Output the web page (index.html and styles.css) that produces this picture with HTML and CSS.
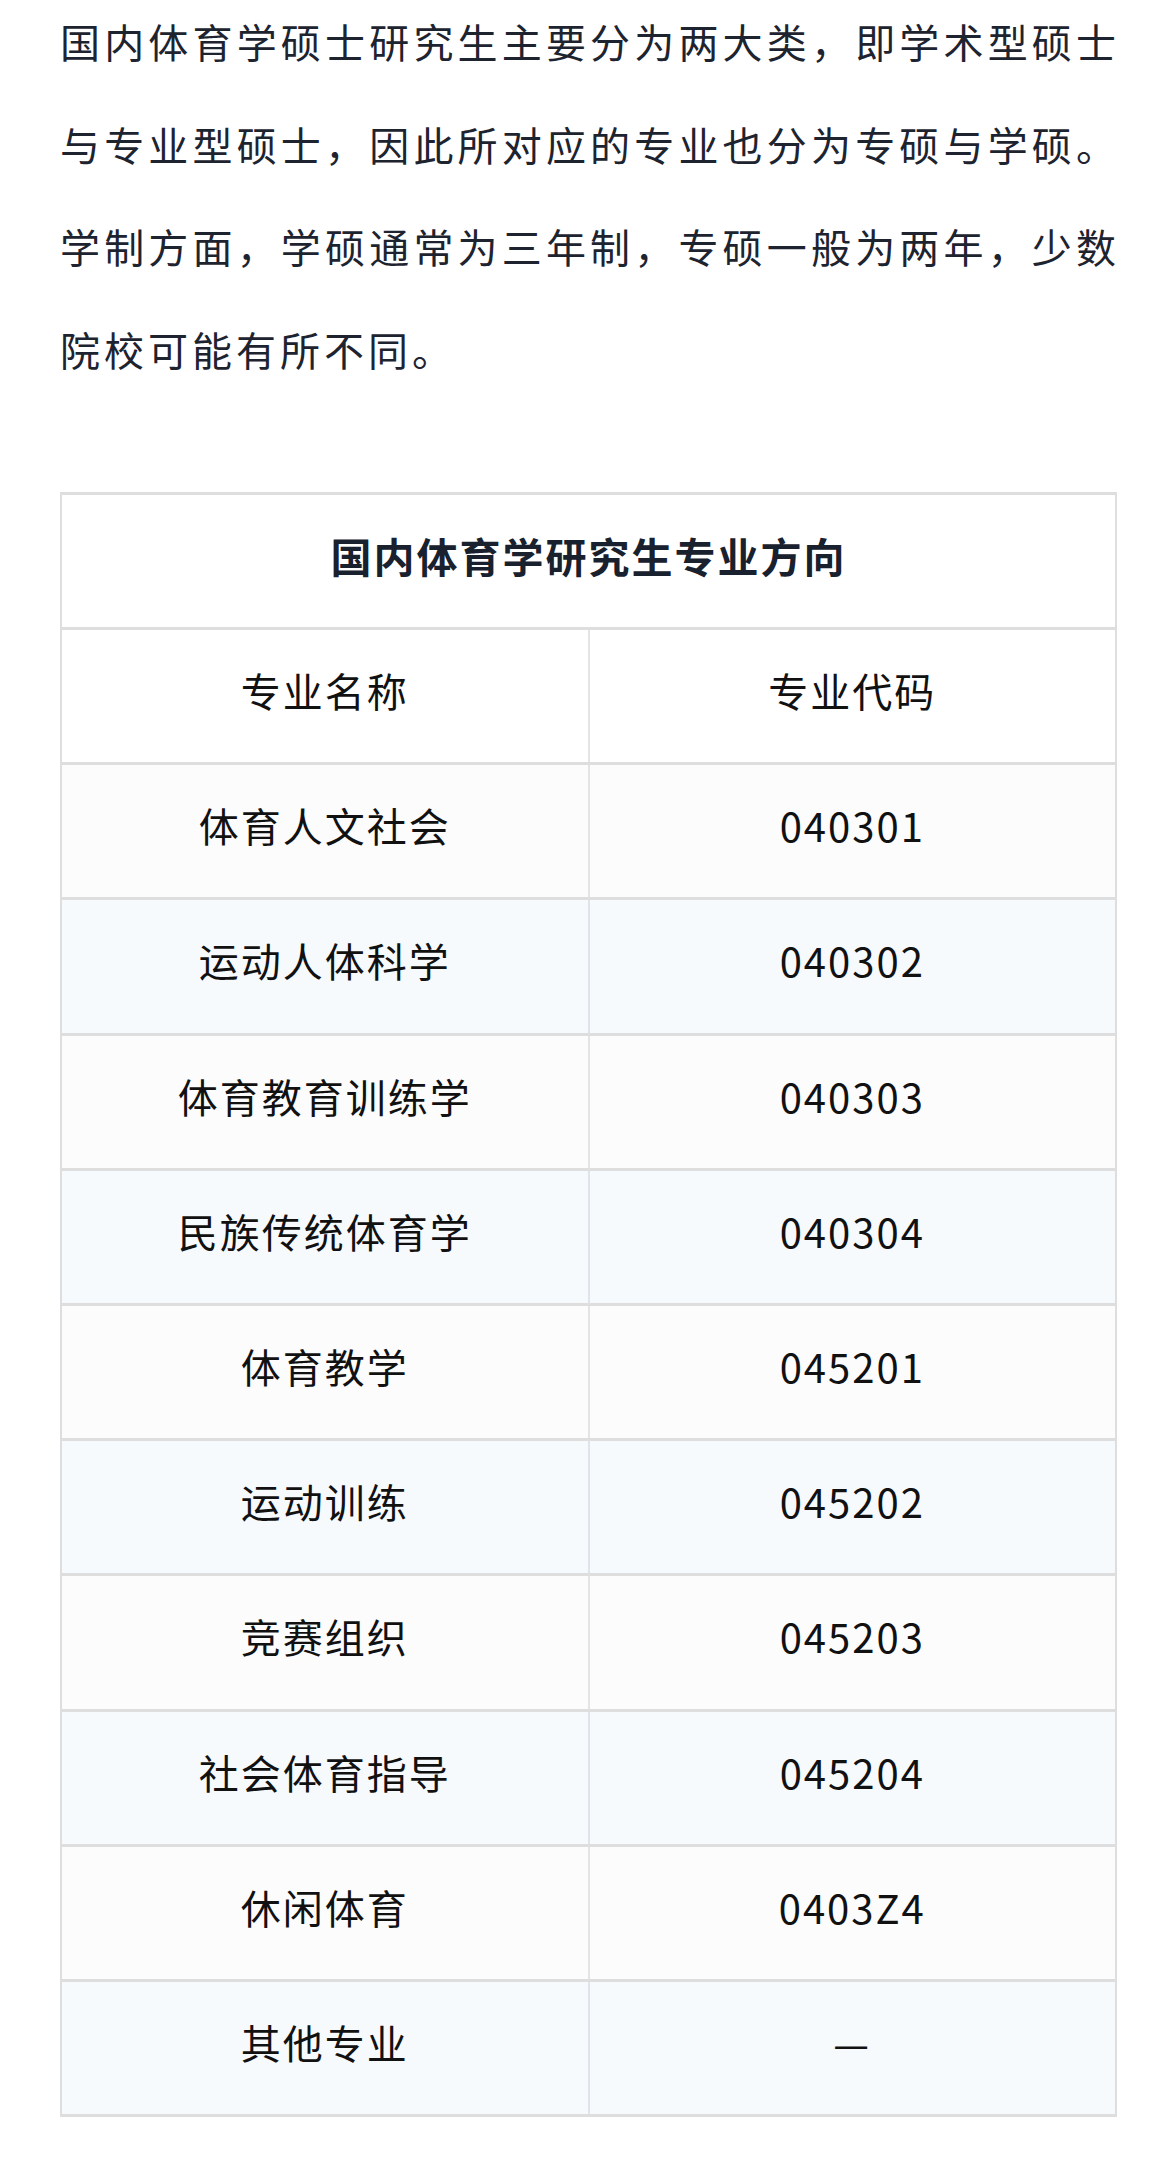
FILE: index.html
```html
<!DOCTYPE html>
<html lang="zh-CN">
<head>
<meta charset="utf-8">
<title>国内体育学研究生专业方向</title>
<link rel="stylesheet" href="styles.css">
</head>
<body>
<main class="page">
  <p class="intro">
    <span class="line">国内体育学硕士研究生主要分为两大类，即学术型硕士</span>
    <span class="line">与专业型硕士，因此所对应的专业也分为专硕与学硕。</span>
    <span class="line">学制方面，学硕通常为三年制，专硕一般为两年，少数</span>
    <span class="line last">院校可能有所不同。</span>
  </p>
  <table class="majors">
    <thead>
      <tr><th colspan="2" class="title">国内体育学研究生专业方向</th></tr>
      <tr class="colhead"><td>专业名称</td><td>专业代码</td></tr>
    </thead>
    <tbody>
      <tr class="odd"><td>体育人文社会</td><td>040301</td></tr>
      <tr class="even"><td>运动人体科学</td><td>040302</td></tr>
      <tr class="odd"><td>体育教育训练学</td><td>040303</td></tr>
      <tr class="even"><td>民族传统体育学</td><td>040304</td></tr>
      <tr class="odd"><td>体育教学</td><td>045201</td></tr>
      <tr class="even"><td>运动训练</td><td>045202</td></tr>
      <tr class="odd"><td>竞赛组织</td><td>045203</td></tr>
      <tr class="even"><td>社会体育指导</td><td>045204</td></tr>
      <tr class="odd"><td>休闲体育</td><td>0403Z4</td></tr>
      <tr class="even"><td>其他专业</td><td>—</td></tr>
    </tbody>
  </table>
</main>
</body>
</html>
```

FILE: styles.css
```css
html, body {
  margin: 0;
  padding: 0;
  background: #ffffff;
}

body {
  font-family: "Noto Sans CJK SC", "Noto Sans", sans-serif;
}

.page {
  padding: 0 60px 50px 60px;
}

.intro {
  margin: -10px 0 0 0;
  font-size: 40px;
  line-height: 102.7px;
  color: #1d2430;
}

.intro .line {
  display: block;
  text-align: justify;
  text-align-last: justify;
}

.intro .line.last {
  text-align-last: left;
  letter-spacing: 4px;
}

.majors {
  margin-top: 91px;
  width: 1057px;
  border-collapse: collapse;
  border: 2px solid #dedede;
  table-layout: fixed;
}

.majors th,
.majors td {
  height: 135.2px;
  box-sizing: border-box;
  padding: 0 0 12px 0;
  text-align: center;
  vertical-align: middle;
  font-size: 40px;
  letter-spacing: 2px;
  color: #111111;
  border-top: 3px solid #dedede;
  border-bottom: 3px solid #dedede;
}

.majors td + td {
  border-left: 2px solid #e4e4e4;
}

.majors .title {
  font-weight: 700;
  font-size: 41px;
  color: #18212d;
  background: #ffffff;
}

.majors .colhead td {
  background: #ffffff;
}

.majors .odd td {
  background: #fcfcfc;
}

.majors .even td {
  background: #f7fafd;
}

.majors .even td + td {
  border-left-color: #dfe4ea;
}
```
